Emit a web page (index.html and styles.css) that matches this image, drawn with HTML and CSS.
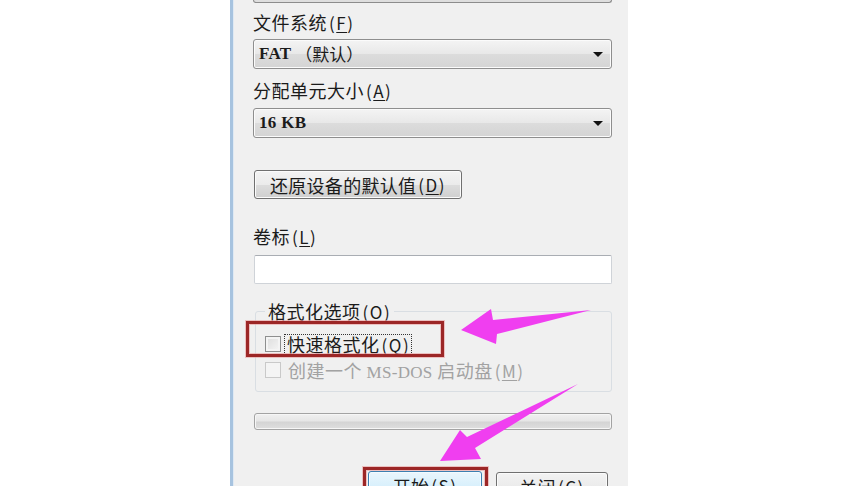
FILE: index.html
```html
<!DOCTYPE html>
<html lang="zh-CN">
<head>
<meta charset="utf-8">
<title>格式化</title>
<link rel="stylesheet" href="styles.css">
</head>
<body>
<div class="page">
  <div class="dialog">
    <div class="prev-field"></div>
    <div class="label">文件系统<span class="acc">(<u>F</u>)</span></div>
    <div class="select"><span class="mono">FAT</span> （默认）<span class="caret"></span></div>
    <div class="label label-2">分配单元大小<span class="acc">(<u>A</u>)</span></div>
    <div class="select select-2"><span class="mono">16 KB</span><span class="caret"></span></div>
    <button class="btn btn-restore">还原设备的默认值<span class="acc">(<u>D</u>)</span></button>
    <div class="label label-3">卷标<span class="acc">(<u>L</u>)</span></div>
    <div class="textbox"></div>
    <fieldset class="group">
      <legend class="legend">格式化选项<span class="acc">(<u>O</u>)</span></legend>
      <div class="check-row">
        <span class="checkbox"></span>
        <span class="focus">快速格式化<span class="acc">(<u>Q</u>)</span></span>
      </div>
      <div class="check-row disabled">
        <span class="checkbox"></span>
        <span class="check-text">创建一个 <span class="mono">MS-DOS</span> 启动盘<span class="acc">(<u>M</u>)</span></span>
      </div>
    </fieldset>
    <div class="progress"></div>
    <div class="actions">
      <button class="btn btn-start">开始<span class="acc">(<u>S</u>)</span></button>
      <button class="btn btn-close">关闭<span class="acc">(<u>C</u>)</span></button>
    </div>
  </div>
  <svg class="annotations" width="851" height="486" viewBox="0 0 851 486" xmlns="http://www.w3.org/2000/svg">
    <rect x="247.5" y="322.5" width="195" height="33" fill="none" stroke="#e9a0a0" stroke-width="5" opacity="0.6"/>
    <rect x="247.5" y="322.5" width="195" height="33" fill="none" stroke="#9c2626" stroke-width="3"/>
    <rect x="364.5" y="468.5" width="122" height="40" fill="none" stroke="#e9a0a0" stroke-width="5" opacity="0.6"/>
    <rect x="364.5" y="468.5" width="122" height="40" fill="none" stroke="#9c2626" stroke-width="3"/>
    <polygon points="461,330 491,309 493,320 591,310 497,334 496,344" fill="#f03ef0"/>
    <polygon points="440,461 460,430 467,437 578,384 475,448 481,459" fill="#f03ef0"/>
  </svg>
</div>
</body>
</html>
```

FILE: styles.css
```css
html, body {
  margin: 0;
  padding: 0;
  background: #ffffff;
}

.page {
  position: relative;
  width: 851px;
  height: 500px;
  overflow: hidden;
  background: #ffffff;
  font-family: "Noto Sans CJK SC", "Noto Sans", sans-serif;
  color: #1b1b1b;
}

.dialog {
  box-sizing: border-box;
  margin-left: 230px;
  width: 398px;
  height: 486px;
  overflow: hidden;
  background: #f0f0f0;
  border-left: 3px solid #a7c3df;
  box-shadow: inset 1px 0 0 #dfe9f3;
  padding: 0 16px 0 20px;
}

.prev-field {
  height: 2px;
  border: 1px solid #8c8c8c;
  border-top: none;
  border-radius: 0 0 3px 3px;
  background: #dedede;
}

.label {
  margin-top: 8px;
  height: 22px;
  line-height: 22px;
  font-size: 18px;
  letter-spacing: 0.5px;
  white-space: nowrap;
}

.label-2 {
  margin-top: 10px;
}

.label-3 {
  margin-top: 26px;
}

.acc {
  font-size: 17px;
  letter-spacing: 1.5px;
  padding-left: 2px;
}

.acc u {
  text-decoration-thickness: 1px;
  text-underline-offset: 2px;
}

.mono {
  font-family: "Liberation Serif", "DejaVu Serif", serif;
  font-weight: bold;
  font-size: 17px;
  letter-spacing: 0.3px;
}

.select {
  position: relative;
  box-sizing: border-box;
  margin-top: 6px;
  height: 30px;
  border: 1px solid #8e8e8e;
  border-radius: 3px;
  background: linear-gradient(#f4f4f4, #e8e8e8 50%, #dcdcdc 51%, #d4d4d4);
  box-shadow: inset 0 0 0 1px #fbfbfb;
  display: flex;
  align-items: center;
  padding-left: 5px;
  font-size: 17px;
  line-height: 28px;
  white-space: pre;
}

.select-2 {
  margin-top: 7px;
}

.caret {
  margin-left: auto;
  margin-right: 8px;
  width: 0;
  height: 0;
  border-left: 5px solid transparent;
  border-right: 5px solid transparent;
  border-top: 5px solid #111111;
}

.btn {
  box-sizing: border-box;
  display: flex;
  align-items: center;
  justify-content: center;
  height: 29px;
  padding: 0;
  border: 1px solid #707070;
  border-radius: 3px;
  background: linear-gradient(#f3f3f3, #ebebeb 50%, #dddddd 51%, #cfcfcf);
  box-shadow: inset 0 0 0 1px #fbfbfb;
  font-family: "Noto Sans CJK SC", "Noto Sans", sans-serif;
  font-size: 18px;
  letter-spacing: 0.3px;
  color: #1b1b1b;
  white-space: nowrap;
}

.btn-restore {
  margin-top: 32px;
  margin-left: 1px;
  width: 208px;
}

.textbox {
  box-sizing: border-box;
  margin-top: 8px;
  margin-left: 1px;
  height: 29px;
  background: #ffffff;
  border: 1px solid #cfd3d8;
  border-top-color: #a9adb3;
  border-radius: 2px;
}

.group {
  box-sizing: border-box;
  margin: 16px 0 0 2px;
  padding: 0 0 10px 9px;
  border: 1px solid #d9dee3;
  border-radius: 3px;
  min-width: 0;
}

.legend {
  padding: 0 3px 0 3px;
  margin-left: 0;
  height: 22px;
  line-height: 22px;
  font-size: 18px;
  letter-spacing: 0.5px;
  white-space: nowrap;
}

.check-row {
  display: flex;
  align-items: center;
  height: 22px;
  margin-top: 11px;
  font-size: 18px;
  letter-spacing: 0.5px;
  white-space: nowrap;
}

.check-row.disabled {
  margin-top: 4px;
  color: #a2a2a2;
}

.check-row.disabled .mono {
  font-weight: normal;
}

.checkbox {
  box-sizing: border-box;
  width: 16px;
  height: 16px;
  border: 1px solid #8e8f8f;
  background: linear-gradient(135deg, #dcdcdc, #f6f6f6);
  box-shadow: inset 0 0 0 2px #f4f4f4;
  margin-right: 4px;
}

.disabled .checkbox {
  border-color: #c9c9c9;
  background: #f4f4f4;
  box-shadow: none;
}

.focus {
  outline: 1px dotted #333333;
  outline-offset: 0;
  padding: 0 1px 0 2px;
  line-height: 19px;
}

.check-text {
  padding-left: 3px;
}

.progress {
  box-sizing: border-box;
  margin-top: 21px;
  margin-left: 1px;
  height: 17px;
  border: 1px solid #a3a3a3;
  border-radius: 3px;
  background: linear-gradient(#f0f0f0, #e6e6e6 45%, #d4d4d4 55%, #dedede);
  box-shadow: inset 0 0 0 1px #f6f6f6;
}

.actions {
  display: flex;
  justify-content: flex-end;
  align-items: flex-start;
  gap: 14px;
  margin-top: 41px;
  padding-right: 4px;
}

.btn-start {
  width: 114px;
  border-color: #3c7fb1;
  background: linear-gradient(#eaf6fd, #d9f0fc 50%, #bee6fd 51%, #a7d9f5);
  box-shadow: inset 0 0 0 1px #f4fbff;
}

.btn-close {
  width: 112px;
  margin-top: 1px;
}

.annotations {
  position: absolute;
  left: 0;
  top: 0;
  pointer-events: none;
}
```
